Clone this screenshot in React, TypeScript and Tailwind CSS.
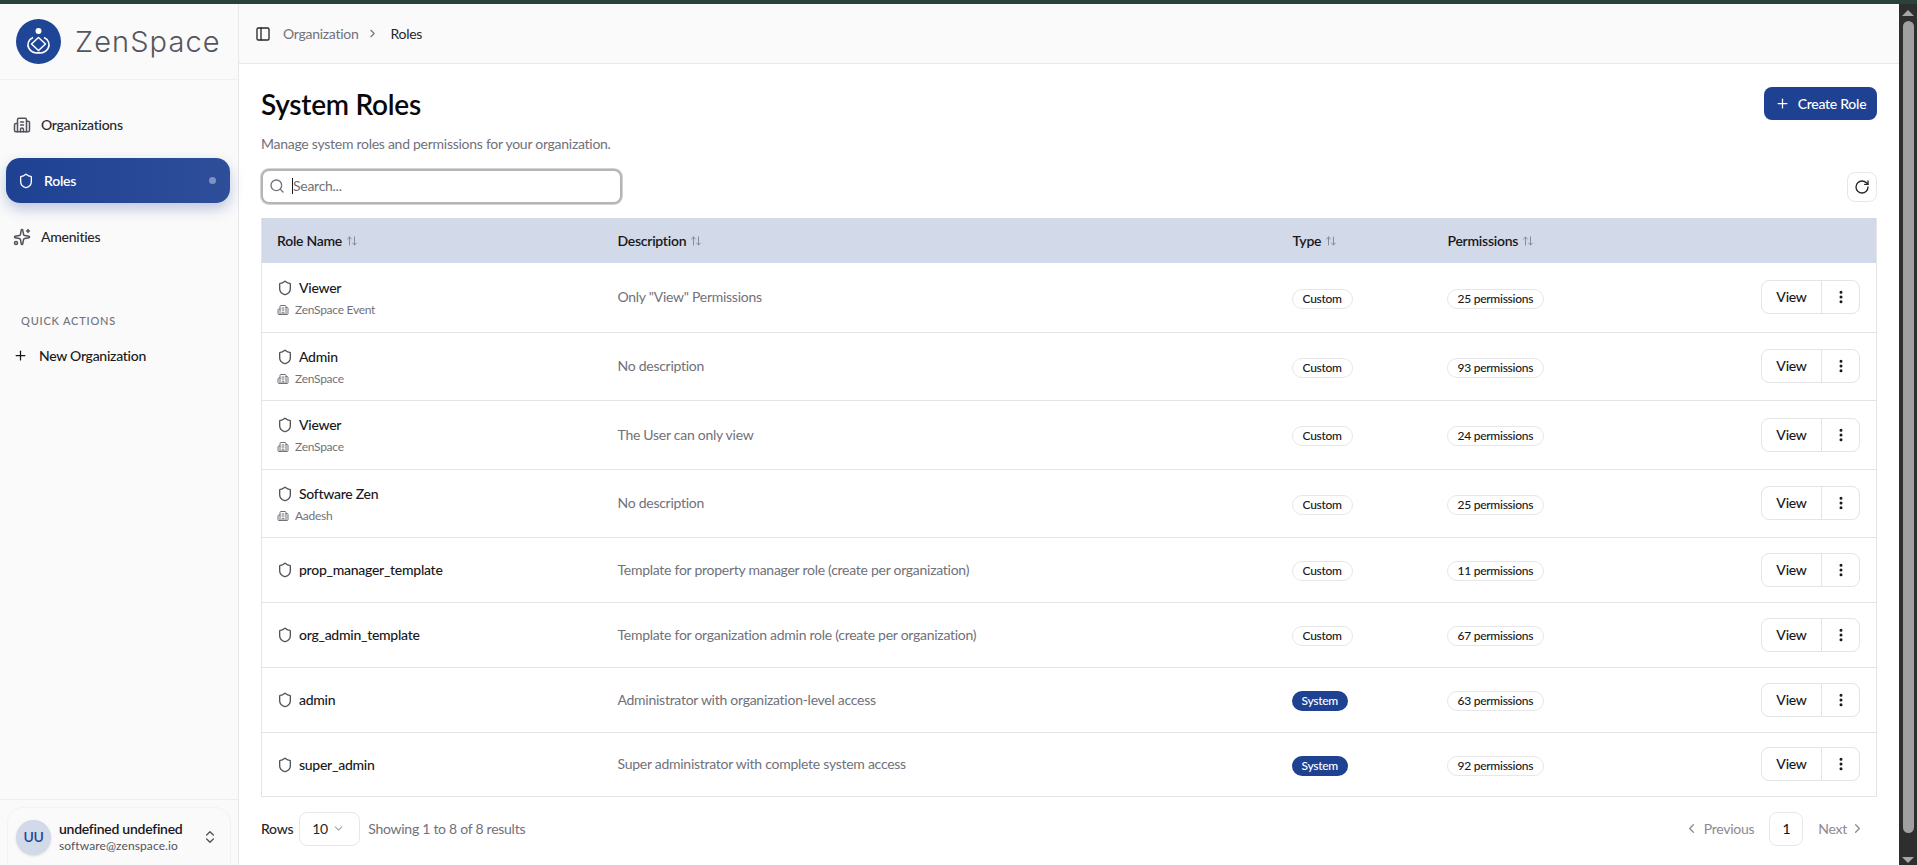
import { Building2, ChevronDown, ChevronLeft, ChevronRight, ChevronsUpDown, EllipsisVertical, ArrowUpDown, PanelLeft, Plus, RotateCw, Search, Shield, Sparkles } from "lucide-react"

const font = { fontFamily: 'Lato, "Noto Sans", sans-serif' }

type Role = {
  name: string
  org?: string
  description: string
  type: string
  permissions: number
  rowClass: string
}

const roles: Role[] = [
  { name: "Viewer", org: "ZenSpace Event", description: 'Only "View" Permissions', type: "Custom", permissions: 25, rowClass: "h-[69px]" },
  { name: "Admin", org: "ZenSpace", description: "No description", type: "Custom", permissions: 93, rowClass: "h-[68px]" },
  { name: "Viewer", org: "ZenSpace", description: "The User can only view", type: "Custom", permissions: 24, rowClass: "h-[69px]" },
  { name: "Software Zen", org: "Aadesh", description: "No description", type: "Custom", permissions: 25, rowClass: "h-[68px]" },
  { name: "prop_manager_template", description: "Template for property manager role (create per organization)", type: "Custom", permissions: 11, rowClass: "h-[65px]" },
  { name: "org_admin_template", description: "Template for organization admin role (create per organization)", type: "Custom", permissions: 67, rowClass: "h-[65px]" },
  { name: "admin", description: "Administrator with organization-level access", type: "System", permissions: 63, rowClass: "h-[65px]" },
  { name: "super_admin", description: "Super administrator with complete system access", type: "System", permissions: 92, rowClass: "h-[64px]" },
]

function Logo() {
  return (
    <div className="flex items-center gap-[14px] pl-4">
      <svg width="45" height="45" viewBox="0 0 45 45" className="shrink-0">
        <circle cx="22.5" cy="22.5" r="22.5" fill="#1f4596" />
        <circle cx="22.5" cy="12" r="3" fill="#fff" />
        <path d="M22.5 18.5 L29.5 25 L22.5 31.5 L15.5 25 Z" fill="none" stroke="#fff" strokeWidth="1.5" strokeLinejoin="round" />
        <path d="M17 18.5 C12.5 20.5 10.5 25.5 13 29.5 C15.5 33.5 20 34.5 24 33.5" fill="none" stroke="#fff" strokeWidth="1.5" />
        <path d="M28 18.5 C32.5 20.5 34.5 25.5 32 29.5 C29.5 33.5 25 34.5 21 33.5" fill="none" stroke="#fff" strokeWidth="1.5" />
      </svg>
      <span className="text-[29px] font-light leading-none tracking-[1.1px] text-[#55555f]" style={{ fontFamily: 'Inter, sans-serif' }}>
        ZenSpace
      </span>
    </div>
  )
}

function Sidebar() {
  return (
    <aside className="flex w-[239px] shrink-0 flex-col border-r border-[#e8e8ea] bg-[#fafafa]">
      <div className="flex h-[76px] shrink-0 items-center border-b border-[#f0f0f2]">
        <Logo />
      </div>
      <nav className="flex flex-col pl-[6px] pr-[8px] pt-[22px]">
        <a className="flex h-[45px] items-center gap-[10px] pl-[7px] text-sm font-medium text-[#27272a]">
          <Building2 size={18} className="text-[#52525b]" />
          Organizations
        </a>
        <a className="mt-[11px] flex h-[45px] items-center gap-[10px] rounded-[14px] bg-gradient-to-r from-[#1e4192] to-[#2e4e9a] pl-[12px] pr-[14px] text-sm font-semibold text-white shadow-[0_6px_14px_rgba(30,65,146,0.28)]">
          <Shield size={16} />
          Roles
          <span className="ml-auto h-[7px] w-[7px] rounded-full bg-[#7f92c8]" />
        </a>
        <a className="mt-[11px] flex h-[45px] items-center gap-[10px] pl-[7px] text-sm font-medium text-[#27272a]">
          <Sparkles size={18} className="text-[#52525b]" />
          Amenities
        </a>
      </nav>
      <div className="mt-[54px] pl-[21px] text-[11px] font-medium tracking-[0.8px] text-[#71717a]">QUICK ACTIONS</div>
      <a className="mt-[16px] flex items-center gap-[11px] pl-[13px] text-sm font-medium text-[#18181b]">
        <Plus size={15} />
        New Organization
      </a>
      <div className="mt-auto h-[66px] border-t border-[#eeeeef] px-[7px] pt-[7px]">
        <div className="flex h-[59px] items-center rounded-t-2xl border border-b-0 border-[#f3f3f4] pl-[8px] pr-3">
          <span className="flex h-[35px] w-[35px] shrink-0 items-center justify-center rounded-full bg-[#d2d9e9] text-sm font-semibold text-[#1f4596] shadow">UU</span>
          <div className="ml-[8px] min-w-0 flex-1">
            <div className="text-sm font-semibold leading-[18px] text-[#18181b]">undefined undefined</div>
            <div className="text-xs leading-[16px] tracking-[0.1px] text-[#52525b]">software@zenspace.io</div>
          </div>
          <ChevronsUpDown size={16} className="shrink-0 text-[#52525b]" />
        </div>
      </div>
    </aside>
  )
}

function SortHead({ label }: { label: string }) {
  return (
    <span className="flex items-center gap-1 text-sm font-semibold text-[#18181b]">
      {label}
      <ArrowUpDown size={12} className="text-[#8a8a92]" />
    </span>
  )
}

function Badge({ children, solid }: { children: React.ReactNode; solid?: boolean }) {
  return (
    <span
      className={
        solid
          ? "inline-flex h-5 items-center rounded-full bg-[#1e4192] px-[10px] text-xs font-medium text-white"
          : "inline-flex h-5 items-center rounded-full border border-[#e7e7e9] bg-white px-[10px] text-xs font-medium text-[#18181b]"
      }
    >
      {children}
    </span>
  )
}

function RoleRow({ role }: { role: Role }) {
  return (
    <tr className={`${role.rowClass} border-b border-[#e4e4e7]`}>
      <td className="pl-[15px] pt-px">
        <div className="flex items-center gap-[6px]">
          <Shield size={16} className="text-[#52525b]" />
          <span className="text-sm font-medium text-[#18181b]">{role.name}</span>
        </div>
        {role.org && (
          <div className="mt-[4px] flex items-center gap-[6px] text-xs text-[#71717a]">
            <Building2 size={12} className="text-[#71717a]" />
            {role.org}
          </div>
        )}
      </td>
      <td className="pl-[15px] text-sm text-[#71717a]">{role.description}</td>
      <td className="pl-[14px] pb-px">
        <Badge solid={role.type === "System"}>{role.type}</Badge>
      </td>
      <td className="pl-[14px] pb-px">
        <Badge>{role.permissions} permissions</Badge>
      </td>
      <td className="pr-4">
        <div className="ml-auto flex h-[34px] w-[99px] items-center rounded-lg border border-[#e4e4e7] bg-white text-sm font-medium text-[#18181b]">
          <span className="flex h-full w-[60px] items-center justify-center border-r border-[#e4e4e7]">View</span>
          <span className="flex flex-1 items-center justify-center">
            <EllipsisVertical size={16} strokeWidth={2.5} />
          </span>
        </div>
      </td>
    </tr>
  )
}

export default function App() {
  return (
    <div className="flex h-screen w-full flex-col overflow-hidden bg-white tracking-[-0.27px]" style={font}>
      <div className="h-1 shrink-0 bg-[#2a4238]" />
      <div className="flex min-h-0 flex-1">
        <Sidebar />
        <div className="flex min-w-0 flex-1 flex-col">
          <header className="flex h-[60px] shrink-0 items-center border-b border-[#e8e8ea] bg-[#fafafa] pl-[16px] text-sm">
            <PanelLeft size={16} className="text-[#27272a]" />
            <span className="ml-[12px] text-[#71717a]">Organization</span>
            <ChevronRight size={13} className="ml-[7px] text-[#71717a]" />
            <span className="ml-[12px] text-[#27272a]">Roles</span>
          </header>
          <main className="flex-1 px-[22px] pt-[21px]">
            <div className="flex items-start justify-between">
              <div>
                <h1 className="text-[28px] font-semibold leading-[38px] text-[#09090b]">System Roles</h1>
                <p className="mt-[11px] text-sm leading-5 text-[#71717a]">Manage system roles and permissions for your organization.</p>
              </div>
              <button className="mt-[2px] flex h-[33px] w-[113px] items-center justify-center gap-[8px] rounded-lg bg-[#1e4192] text-sm font-medium text-white">
                <Plus size={15} />
                Create Role
              </button>
            </div>
            <div className="mt-[15px] flex items-center justify-between">
              <div className="flex h-[35px] w-[361px] items-center gap-[7px] rounded-lg border-2 border-[#b5b5b5] bg-white pb-px pl-[6px] ring-1 ring-[#d4d4d8]">
                <Search size={16} className="text-[#71717a]" />
                <span className="border-l border-[#18181b] text-sm leading-4 text-[#71717a]">Search...</span>
              </div>
              <button className="flex h-[30px] w-[30px] items-center justify-center rounded-lg border border-[#e7e7e9]">
                <RotateCw size={16} className="text-[#27272a]" />
              </button>
            </div>
            <table className="mt-[14px] w-full table-fixed border-x border-[#e4e4e7]">
              <thead>
                <tr className="h-[45px] bg-[#d2d9e9] text-left">
                  <th className="w-[341px] pl-[15px] font-normal"><SortHead label="Role Name" /></th>
                  <th className="w-[675px] pl-[15px] font-normal"><SortHead label="Description" /></th>
                  <th className="w-[155px] pl-[15px] font-normal"><SortHead label="Type" /></th>
                  <th className="w-[200px] pl-[15px] font-normal"><SortHead label="Permissions" /></th>
                  <th />
                </tr>
              </thead>
              <tbody>
                {roles.map((role, i) => (
                  <RoleRow key={i} role={role} />
                ))}
              </tbody>
            </table>
            <div className="mt-[15px] flex items-center text-sm">
              <span className="font-medium text-[#27272a]">Rows</span>
              <div className="ml-[6px] flex h-[34px] w-[61px] items-center justify-between rounded-lg border border-[#e7e7e9] pl-3 pr-[14px] text-[#27272a]">
                10
                <ChevronDown size={13} className="text-[#a1a1aa]" />
              </div>
              <span className="ml-[8px] text-[#71717a]">Showing 1 to 8 of 8 results</span>
              <div className="ml-auto flex items-center pr-[12px]">
                <span className="flex items-center gap-[5px] text-[#8a8a92]">
                  <ChevronLeft size={15} />
                  Previous
                </span>
                <span className="ml-[15px] flex h-[34px] w-[34px] items-center justify-center rounded-lg border border-[#e7e7e9] font-medium text-[#18181b]">1</span>
                <span className="ml-[15px] flex items-center gap-[3px] text-[#8a8a92]">
                  Next
                  <ChevronRight size={15} />
                </span>
              </div>
            </div>
          </main>
        </div>
        <div className="flex w-[18px] shrink-0 flex-col items-center bg-[#2e2e2e] pt-[6px]">
          <span className="h-0 w-0 border-x-[6px] border-b-[6px] border-x-transparent border-b-[#a6a6a6]" />
          <span className="mt-[5px] h-[812px] w-[11px] rounded-full bg-[#a0a0a0]" />
          <span className="mt-auto mb-[2px] h-0 w-0 border-x-[6px] border-t-[6px] border-x-transparent border-t-[#a6a6a6]" />
        </div>
      </div>
    </div>
  )
}
